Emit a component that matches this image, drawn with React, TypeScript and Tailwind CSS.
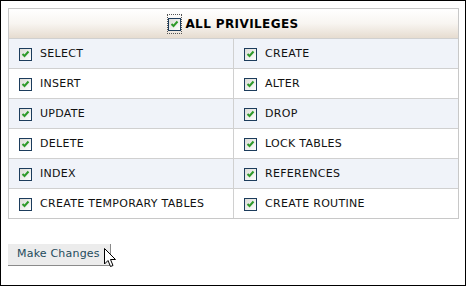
const rows: [string, string][] = [
  ["SELECT", "CREATE"],
  ["INSERT", "ALTER"],
  ["UPDATE", "DROP"],
  ["DELETE", "LOCK TABLES"],
  ["INDEX", "REFERENCES"],
  ["CREATE TEMPORARY TABLES", "CREATE ROUTINE"],
];

function Check() {
  return (
    <span className="inline-flex h-[13px] w-[13px] shrink-0 items-center justify-center border border-[#1c3c5c] bg-gradient-to-br from-[#dcdcd7] to-white">
      <svg width="9" height="8" viewBox="0 0 9 8">
        <path d="M1.5 4 L3.5 6 L7.5 1.5" fill="none" stroke="#2f9a2a" strokeWidth="2" />
      </svg>
    </span>
  );
}

function Cell({ label, border }: { label: string; border?: boolean }) {
  return (
    <div
      className={`flex h-[29px] items-center gap-[8px] pl-[10px] pt-[1px] ${border ? "border-r border-[#d0d0d0]" : ""}`}
    >
      <Check />
      <span className="tracking-[0.3px]">{label}</span>
    </div>
  );
}

export default function App() {
  return (
    <div className="relative h-[286px] w-[466px] border border-black bg-white pl-[7px] pt-[7px] font-['DejaVu_Sans',Verdana,sans-serif] text-[11px] text-[#111]">
      <div className="w-[451px] border border-[#c8c8c8]">
        <div className="flex h-[29px] items-center justify-center gap-[4px] bg-gradient-to-b from-white via-[#f8f5f1] to-[#e6dcd0] pt-[1px] font-bold text-[12px] tracking-[0.4px] text-black">
          <span className="outline outline-1 outline-dotted outline-[#555]">
            <Check />
          </span>
          <span>ALL PRIVILEGES</span>
        </div>
        {rows.map(([a, b], i) => (
          <div
            key={a}
            className={`grid grid-cols-[225px_1fr] border-t border-[#d0d0d0] ${i % 2 === 0 ? "bg-[#f0f3f9]" : "bg-white"}`}
          >
            <Cell label={a} border />
            <Cell label={b} />
          </div>
        ))}
      </div>
      <button className="mt-[25px] h-[22px] w-[103px] border-r border-b border-[#8a8a8a] bg-[#ececec] text-left pl-[9px] text-[11px] tracking-[0.2px] text-[#1e4b5c]">
        Make Changes
      </button>
      <svg className="absolute left-[103px] top-[247px]" width="13" height="21" viewBox="0 0 13 21">
        <path
          d="M0.5 0.5 L0.5 16 L4 12.5 L6.5 18.5 L9 17.5 L6.5 11.5 L11.5 11.5 Z"
          fill="white"
          stroke="black"
          strokeWidth="1"
        />
      </svg>
    </div>
  );
}
